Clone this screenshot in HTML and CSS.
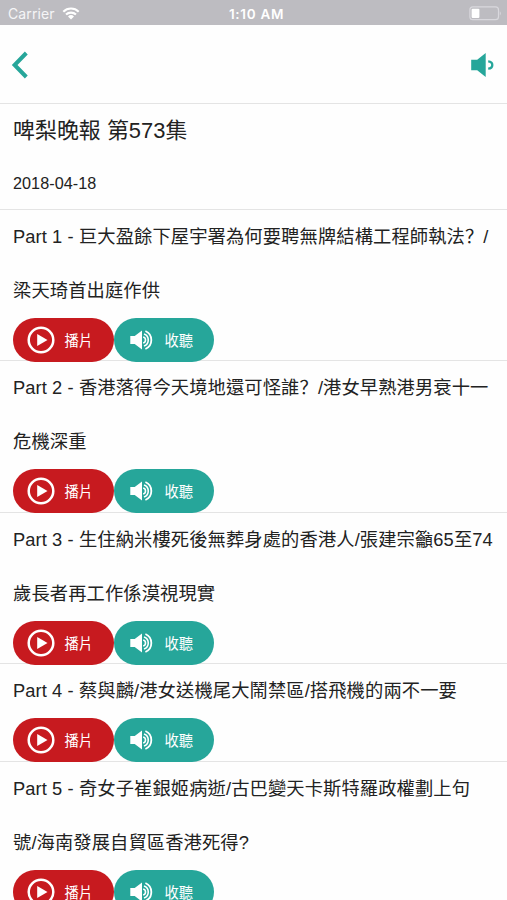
FILE: index.html
```html
<!DOCTYPE html>
<html lang="zh-Hant">
<head>
<meta charset="utf-8">
<title>啤梨晚報</title>
<link rel="stylesheet" href="styles.css">
</head>
<body>
<svg class="defs" width="0" height="0">
  <symbol id="play" viewBox="0 0 28 28"><circle cx="14" cy="14" r="12.3" fill="none" stroke="currentColor" stroke-width="2.5"/><path d="M10.2 8v12l10.3-6z" fill="currentColor"/></symbol>
  <symbol id="sound" viewBox="0 0 24 20"><path d="M0.3 6h4.4L12 .4v19.2L4.7 14H.3z" fill="currentColor"/><g fill="none" stroke="currentColor" stroke-width="1.6"><path d="M13.2 7a3.1 3.1 0 0 1 0 6"/><path d="M14 3.9a6.5 6.5 0 0 1 0 12.2"/><path d="M15.4 1a9.8 9.8 0 0 1 0 18" stroke-width="1.8"/></g></symbol>
</svg>
<header class="status">
  <div class="carrier">Carrier
    <svg width="18" height="13" viewBox="0 0 18 13"><g fill="none" stroke="#fff" stroke-width="2.1"><path d="M1.3 4.7a11 11 0 0 1 15.4 0"/><path d="M4 7.6a7.2 7.2 0 0 1 10 0"/></g><path d="M9 12.5L6 9.5a4.3 4.3 0 0 1 6 0z" fill="#fff"/></svg>
  </div>
  <div class="time">1:10 AM</div>
  <svg class="battery" width="33" height="15" viewBox="0 0 33 15"><rect x=".9" y=".9" width="28.6" height="12.8" rx="3" fill="none" stroke="#d9d8dd" stroke-width="1.2"/><rect x="2.6" y="2.7" width="7.8" height="9.2" rx="1" fill="#fff"/><path d="M30.8 5.2q2 2.1 0 4.4z" fill="#d9d8dd"/></svg>
</header>
<nav class="nav">
  <svg width="18" height="30" viewBox="0 0 18 30"><path d="M16.3 3L4.6 15l11.7 12" fill="none" stroke="#26a69a" stroke-width="4"/></svg>
  <svg width="24" height="26" viewBox="0 0 24 26"><path d="M1.2 7.8h6L15.7 1v24L7.2 18.2h-6z" fill="#26a69a"/><path d="M18.2 9.3q4.1.3 4.1 3.7t-4.1 3.7" fill="none" stroke="#26a69a" stroke-width="2.3"/></svg>
</nav>
<main>
  <section class="head">
    <h1>啤梨晚報 第573集</h1>
    <p class="date">2018-04-18</p>
  </section>
  <section class="part">
    <p>Part 1 - 巨大盈餘下屋宇署為何要聘無牌結構工程師執法<span class="mark" lang="zh-Hans">？</span>/<br>梁天琦首出庭作供</p>
    <div class="actions"><a class="btn play"><svg><use href="#play"/></svg><span>播片</span></a><a class="btn listen"><svg><use href="#sound"/></svg><span>收聽</span></a></div>
  </section>
  <section class="part">
    <p>Part 2 - 香港落得今天境地還可怪誰<span class="mark" lang="zh-Hans">？</span>/港女早熟港男衰十一<br>危機深重</p>
    <div class="actions"><a class="btn play"><svg><use href="#play"/></svg><span>播片</span></a><a class="btn listen"><svg><use href="#sound"/></svg><span>收聽</span></a></div>
  </section>
  <section class="part">
    <p>Part 3 - 生住納米樓死後無葬身處的香港人/張建宗籲65至74<br>歲長者再工作係漠視現實</p>
    <div class="actions"><a class="btn play"><svg><use href="#play"/></svg><span>播片</span></a><a class="btn listen"><svg><use href="#sound"/></svg><span>收聽</span></a></div>
  </section>
  <section class="part">
    <p>Part 4 - 蔡與麟/港女送機尾大鬧禁區/搭飛機的兩不一要</p>
    <div class="actions"><a class="btn play"><svg><use href="#play"/></svg><span>播片</span></a><a class="btn listen"><svg><use href="#sound"/></svg><span>收聽</span></a></div>
  </section>
  <section class="part">
    <p>Part 5 - 奇女子崔銀姬病逝/古巴變天卡斯特羅政權劃上句<br>號/海南發展自貿區香港死得?</p>
    <div class="actions"><a class="btn play"><svg><use href="#play"/></svg><span>播片</span></a><a class="btn listen"><svg><use href="#sound"/></svg><span>收聽</span></a></div>
  </section>
</main>
</body>
</html>
```
FILE: styles.css
```css
* { box-sizing: border-box; margin: 0; padding: 0; }
html, body { height: 900px; overflow: hidden; }
body {
  background: #fefefe;
  color: #222;
  font-family: "Liberation Sans", "Noto Sans CJK TC", sans-serif;
  display: flex;
  flex-direction: column;
}
.defs { position: absolute; }
.status {
  height: 25px;
  flex: none;
  background: #bdbcc1;
  color: #fff;
  display: grid;
  grid-template-columns: 1fr auto 1fr;
  align-items: center;
  padding: 2px 5px 0 8px;
  font: 14px/20px Inter, sans-serif;
}
.carrier { display: flex; align-items: center; gap: 7px; color: #f5f5f7; letter-spacing: .1px; }
.time { font-weight: 600; font-size: 13.5px; letter-spacing: .7px; padding-left: 3px; }
.battery { justify-self: end; }
.nav {
  height: 79px;
  flex: none;
  border-bottom: 1px solid #e4e4e4;
  display: flex;
  align-items: center;
  justify-content: space-between;
  padding: 2px 13px 0 10px;
}
.head { height: 106px; border-bottom: 1px solid #e4e4e4; padding-left: 13px; }
h1 { font-size: 21.9px; font-weight: 400; line-height: 53px; letter-spacing: .05px; }
.date { font-size: 16.2px; line-height: 53px; letter-spacing: .05px; }
.part { border-bottom: 1px solid #e4e4e4; padding-left: 13px; }
.part p { font-size: 18.3px; line-height: 53.8px; letter-spacing: .1px; white-space: nowrap; }
.mark { font-family: "Noto Sans CJK SC", sans-serif; line-height: 1; }
.actions { display: flex; height: 42.9px; }
.btn {
  width: 100.5px;
  height: 44px;
  border-radius: 22px;
  color: #fff;
  display: flex;
  align-items: center;
  font-size: 14.3px;
  position: relative;
}
.btn span { padding-bottom: 1px; }
.btn.play { background: #c71a1f; padding-left: 14px; }
.btn.listen { background: #26a69a; padding-left: 16px; }
.play svg { width: 28px; height: 28px; margin-right: 9.5px; }
.listen svg { width: 24px; height: 20px; margin-right: 11px; }
```
